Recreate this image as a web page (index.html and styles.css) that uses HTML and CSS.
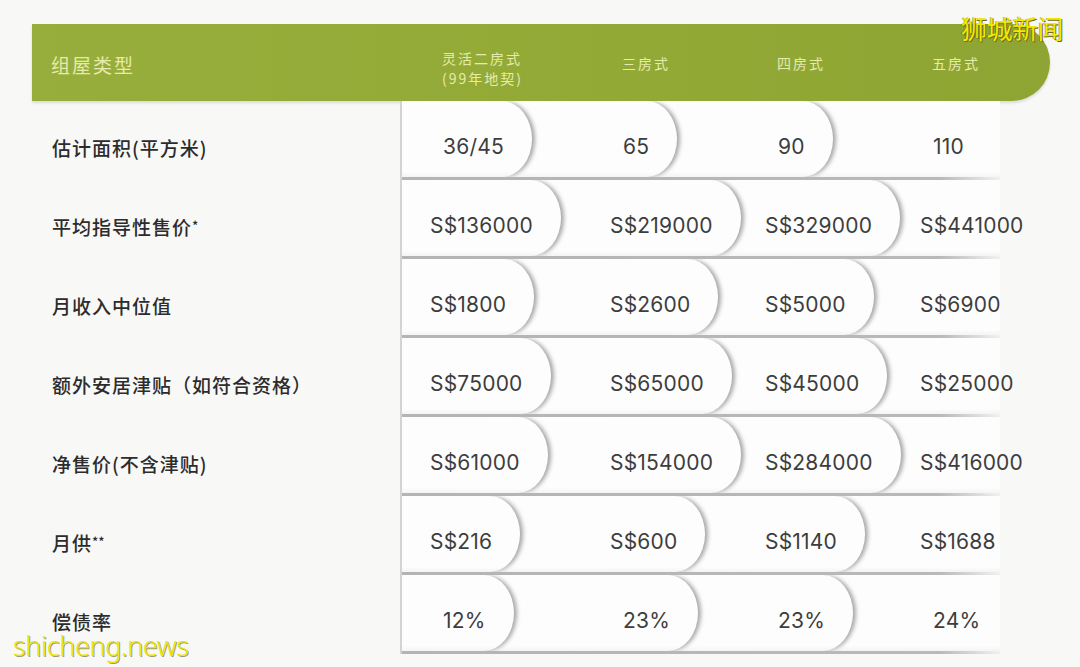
FILE: index.html
```html
<!DOCTYPE html>
<html lang="zh">
<head>
<meta charset="utf-8">
<title>组屋类型</title>
<link rel="stylesheet" href="styles.css">
</head>
<body>
<div class="sheet">
  <div class="head">
    <div class="head-label">组屋类型</div>
    <div class="cols head-cols">
      <div class="hc two"><span>灵活二房式</span><span>(99年地契)</span></div>
      <div class="hc">三房式</div>
      <div class="hc">四房式</div>
      <div class="hc">五房式</div>
    </div>
  </div>

  <div class="row">
    <div class="label">估计面积(平方米)</div>
    <div class="cols vals short">
      <div class="cell"><span class="pill">36/45</span></div>
      <div class="cell"><span class="pill">65</span></div>
      <div class="cell"><span class="pill">90</span></div>
      <div class="cell"><span class="val">110</span></div>
    </div>
  </div>

  <div class="row">
    <div class="label">平均指导性售价<span class="star">*</span></div>
    <div class="cols vals">
      <div class="cell"><span class="pill">S$136000</span></div>
      <div class="cell"><span class="pill">S$219000</span></div>
      <div class="cell"><span class="pill">S$329000</span></div>
      <div class="cell"><span class="val">S$441000</span></div>
    </div>
  </div>

  <div class="row">
    <div class="label">月收入中位值</div>
    <div class="cols vals">
      <div class="cell"><span class="pill">S$1800</span></div>
      <div class="cell"><span class="pill">S$2600</span></div>
      <div class="cell"><span class="pill">S$5000</span></div>
      <div class="cell"><span class="val">S$6900</span></div>
    </div>
  </div>

  <div class="row">
    <div class="label">额外安居津贴（如符合资格）</div>
    <div class="cols vals">
      <div class="cell"><span class="pill">S$75000</span></div>
      <div class="cell"><span class="pill">S$65000</span></div>
      <div class="cell"><span class="pill">S$45000</span></div>
      <div class="cell"><span class="val">S$25000</span></div>
    </div>
  </div>

  <div class="row">
    <div class="label">净售价(不含津贴)</div>
    <div class="cols vals">
      <div class="cell"><span class="pill">S$61000</span></div>
      <div class="cell"><span class="pill">S$154000</span></div>
      <div class="cell"><span class="pill">S$284000</span></div>
      <div class="cell"><span class="val">S$416000</span></div>
    </div>
  </div>

  <div class="row">
    <div class="label">月供<span class="star">**</span></div>
    <div class="cols vals">
      <div class="cell"><span class="pill">S$216</span></div>
      <div class="cell"><span class="pill">S$600</span></div>
      <div class="cell"><span class="pill">S$1140</span></div>
      <div class="cell"><span class="val">S$1688</span></div>
    </div>
  </div>

  <div class="row">
    <div class="label">偿债率</div>
    <div class="cols vals short">
      <div class="cell"><span class="pill">12%</span></div>
      <div class="cell"><span class="pill">23%</span></div>
      <div class="cell"><span class="pill">23%</span></div>
      <div class="cell"><span class="val">24%</span></div>
    </div>
  </div>
</div>

<div class="wm-cn">狮城新闻</div>
<div class="wm-en">shicheng.news</div>
</body>
</html>
```

FILE: styles.css
```css
html, body {
  margin: 0;
  padding: 0;
}

body {
  width: 1080px;
  height: 667px;
  overflow: hidden;
  position: relative;
  background: #f8f8f7;
  font-family: "Noto Sans CJK SC", "Noto Sans", sans-serif;
}

.sheet {
  padding: 24px 0 0 32px;
}

/* ---------- header band ---------- */
.head {
  display: flex;
  width: 1018px;
  height: 77px;
  background: linear-gradient(to right, #98ae3c, #92a936 60%, #8ea533);
  border-radius: 0 38px 38px 0;
  box-shadow: 0 2px 3px rgba(0, 0, 0, 0.12);
  color: #e5ebab;
}

.head-label {
  width: 368px;
  box-sizing: border-box;
  padding: 4px 0 0 19px;
  display: flex;
  align-items: center;
  font-size: 19px;
  letter-spacing: 2px;
}

.cols {
  display: grid;
  grid-template-columns: 180px 155px 155px 1fr;
}

.head-cols {
  flex: 1;
}

.hc {
  display: flex;
  flex-direction: column;
  justify-content: center;
  padding-left: 42px;
  font-size: 14px;
  letter-spacing: 2px;
  line-height: 20px;
}

.hc.two {
  padding-top: 10px;
}

/* ---------- body rows ---------- */
.row {
  display: flex;
  height: 79px;
}

.label {
  width: 368px;
  box-sizing: border-box;
  padding: 14px 0 0 20px;
  display: flex;
  align-items: center;
  font-size: 19px;
  font-weight: 500;
  letter-spacing: 1px;
  color: #2c2c2c;
}

.star {
  font-size: 13px;
  align-self: flex-start;
  margin-top: 22px;
  letter-spacing: 0;
}

.vals {
  width: 600px;
  box-sizing: border-box;
  border-left: 2px solid #d3d3d3;
  background:
    linear-gradient(to right, #b4b4b4 0, #b9b9b9 90%, rgba(190, 190, 190, 0) 100%) left bottom / 100% 3px no-repeat,
    linear-gradient(to bottom, rgba(0, 0, 0, 0) 0, rgba(0, 0, 0, 0.06) 100%) left bottom / 100% 8px no-repeat,
    #fdfdfd;
}

.cell {
  display: flex;
  align-items: stretch;
  padding-bottom: 3px;
  font-family: Inter, "Noto Sans", sans-serif;
  font-size: 21px;
  color: #3d3d3d;
}

.pill,
.val {
  display: flex;
  align-items: center;
  box-sizing: border-box;
  padding: 14px 28px 0 28px;
  letter-spacing: 0.2px;
}

.pill {
  border-radius: 0 30px 30px 0 / 0 38px 38px 0;
  box-shadow: 4px 0 4px -1px rgba(0, 0, 0, 0.34);
  clip-path: inset(0 -14px 0 0);
}

.short .pill,
.short .val {
  padding-left: 41px;
}

/* ---------- watermarks ---------- */
.wm-cn {
  position: absolute;
  left: 961px;
  top: 13px;
  font-size: 26px;
  line-height: 30px;
  letter-spacing: -0.5px;
  color: #f4e800;
  font-family: "Noto Sans CJK SC", sans-serif;
  font-weight: 400;
  text-shadow: 1px 1px 0 #6f6a20, -1px 0 0 rgba(60, 60, 20, 0.35);
}

.wm-en {
  position: absolute;
  left: 13px;
  top: 630px;
  font-size: 27px;
  line-height: 32px;
  letter-spacing: -0.4px;
  color: #ede500;
  font-family: "Noto Sans", sans-serif;
  font-weight: 300;
  text-shadow: 1px 1px 0 rgba(90, 90, 30, 0.6);
}
```
